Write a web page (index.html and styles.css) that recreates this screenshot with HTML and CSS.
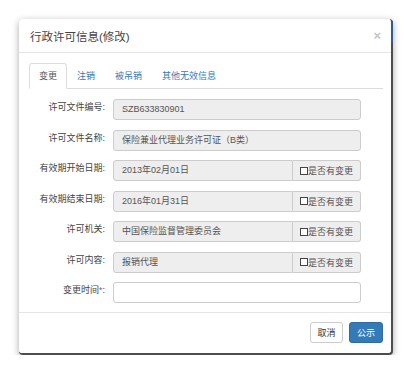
FILE: index.html
```html
<!DOCTYPE html>
<html lang="zh-CN">
<head>
  <meta charset="UTF-8" />
  <meta name="viewport" content="width=device-width, initial-scale=1" />
  <title>行政许可信息(修改)</title>
  <link rel="stylesheet" href="styles.css">
</head>
<body>
  <!-- Modal -->
  <div class="modal">
    <div class="modal-header">
      <div class="modal-title">行政许可信息(修改)</div>
      <span class="close">&times;</span>
    </div>

    <div class="modal-body">
      <ul class="tabs">
        <li class="tab active">变更</li>
        <li class="tab">注销</li>
        <li class="tab">被吊销</li>
        <li class="tab">其他无效信息</li>
      </ul>

      <div class="form">
        <div class="form-row">
          <label>许可文件编号:</label>
          <div class="input disabled">SZB633830901</div>
        </div>
        <div class="form-row">
          <label>许可文件名称:</label>
          <div class="input disabled">保险兼业代理业务许可证（B类）</div>
        </div>
        <div class="form-row">
          <label>有效期开始日期:</label>
          <div class="input-group">
            <div class="input disabled">2013年02月01日</div>
            <span class="addon"><span class="check"></span>是否有变更</span>
          </div>
        </div>
        <div class="form-row">
          <label>有效期结束日期:</label>
          <div class="input-group">
            <div class="input disabled">2016年01月31日</div>
            <span class="addon"><span class="check"></span>是否有变更</span>
          </div>
        </div>
        <div class="form-row">
          <label>许可机关:</label>
          <div class="input-group">
            <div class="input disabled">中国保险监督管理委员会</div>
            <span class="addon"><span class="check"></span>是否有变更</span>
          </div>
        </div>
        <div class="form-row">
          <label>许可内容:</label>
          <div class="input-group">
            <div class="input disabled">报销代理</div>
            <span class="addon"><span class="check"></span>是否有变更</span>
          </div>
        </div>
        <div class="form-row">
          <label>变更时间<span class="req">*</span>:</label>
          <input type="text" class="input" />
        </div>
      </div>
    </div>

    <div class="modal-footer">
      <button class="btn">取消</button>
      <button class="btn btn-primary">公示</button>
    </div>
  </div>
</body>
</html>
```

FILE: styles.css
```css
* {
  box-sizing: border-box;
  margin: 0;
  padding: 0;
}

body {
  background: #fff;
  font-family: "Liberation Sans", "Noto Sans CJK SC", sans-serif;
  font-size: 9px;
  color: #333;
  padding: 19px 0 0 19px;
}

.modal {
  position: relative;
  width: 374px;
  background: #fff;
  border-radius: 4px;
  border-right: 2px solid #4e4e4e;
  border-bottom: 2px solid #4e4e4e;
  box-shadow: 0 2px 7px rgba(0, 0, 0, 0.35);
}

.modal::after {
  content: "";
  position: absolute;
  top: 2px;
  right: -2px;
  width: 2px;
  height: 22px;
  background: #2d5d92;
}

.modal-header {
  height: 34px;
  display: flex;
  align-items: center;
  justify-content: space-between;
  padding: 0 10px 0 11px;
  border-bottom: 1px solid #e5e5e5;
}

.modal-title {
  font-size: 11.5px;
  color: #444;
}

.close {
  font-size: 13px;
  font-weight: bold;
  color: #c4c4c4;
  line-height: 1;
}

.modal-body {
  padding: 10px 8px 9px 10px;
}

.tabs {
  list-style: none;
  display: flex;
  border-bottom: 1px solid #ddd;
}

.tab {
  height: 26px;
  line-height: 25px;
  padding: 0 9px;
  margin-bottom: -1px;
  border: 1px solid transparent;
  border-radius: 3px 3px 0 0;
  color: #337ab7;
}

.tab.active {
  color: #555;
  background: #fff;
  border-color: #ddd;
  border-bottom-color: #fff;
}

.form {
  padding-top: 10px;
  display: flex;
  flex-direction: column;
  gap: 9.5px;
}

.form-row {
  display: grid;
  grid-template-columns: 76px 248px;
  column-gap: 8px;
}

.form-row label {
  text-align: right;
  line-height: 11px;
  padding-top: 3px;
  color: #444;
}

.req {
  color: #e4393c;
}

.input {
  height: 21px;
  line-height: 19px;
  padding: 0 8px;
  border: 1px solid #ccc;
  border-radius: 3px;
  background: #fff;
  color: #555;
  font-family: inherit;
  font-size: 9px;
  width: 100%;
  white-space: nowrap;
  overflow: hidden;
}

.input.disabled {
  background: #eee;
}

.input-group {
  display: flex;
}

.input-group .input {
  flex: 1;
  border-radius: 3px 0 0 3px;
}

.addon {
  width: 68px;
  height: 21px;
  display: flex;
  align-items: center;
  justify-content: center;
  border: 1px solid #ccc;
  border-left: 0;
  border-radius: 0 3px 3px 0;
  background: #eee;
  color: #555;
  white-space: nowrap;
}

.check {
  width: 8px;
  height: 8px;
  border: 1px solid #444;
  background: #fff;
}

.modal-footer {
  display: flex;
  justify-content: flex-end;
  gap: 6px;
  padding: 9px 8px 10px;
  border-top: 1px solid #e5e5e5;
}

.btn {
  height: 21px;
  width: 33px;
  border: 1px solid #ccc;
  border-radius: 3px;
  background: #fff;
  color: #333;
  font-family: inherit;
  font-size: 9px;
}

.btn-primary {
  width: 34px;
  background: #337ab7;
  border-color: #2e6da4;
  color: #fff;
}
```
